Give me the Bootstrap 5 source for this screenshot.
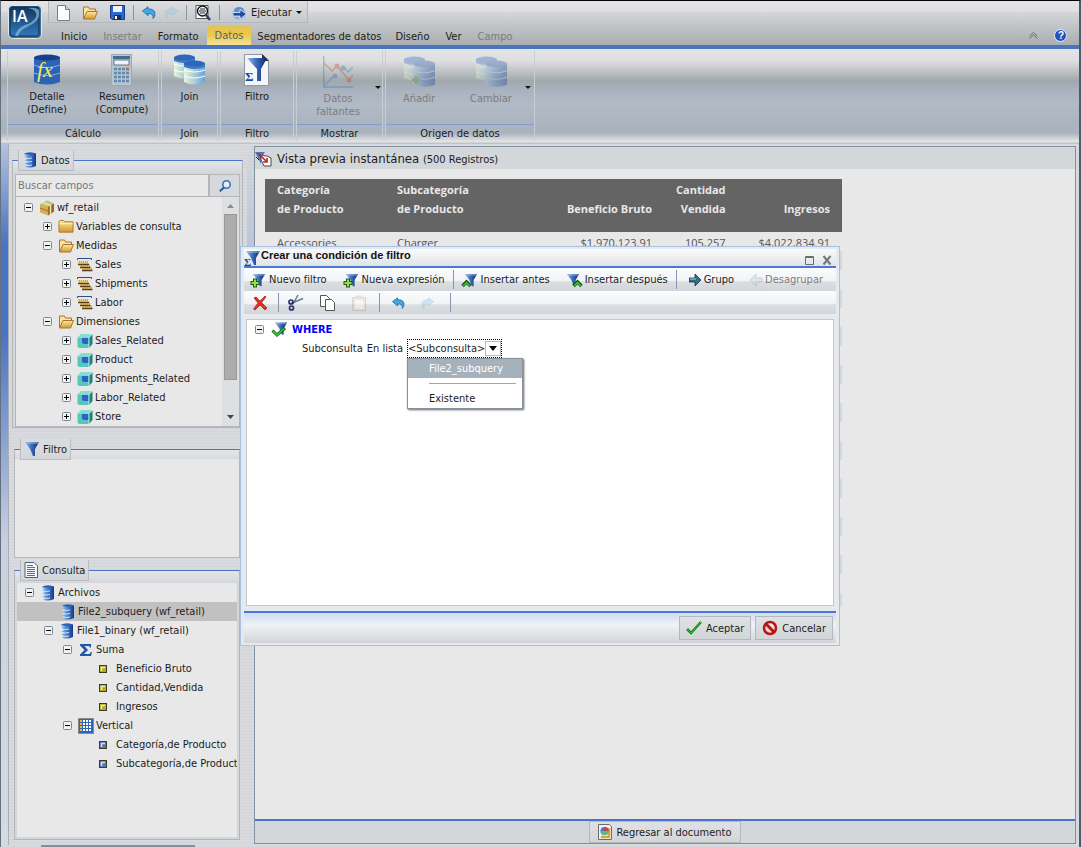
<!DOCTYPE html>
<html lang="es">
<head>
<meta charset="utf-8">
<meta name="viewport" content="width=device-width, initial-scale=1">
<title>InfoAssist</title>
<link href="https://cdn.jsdelivr.net/npm/bootstrap@5.3.0/dist/css/bootstrap.min.css" rel="stylesheet">
<style>
body{font:11px/13px "DejaVu Sans Condensed","Open Sans",sans-serif;color:#1c1c1c;background:#d6d8dc}
button,input{font:inherit;color:inherit}
button{background:none;border:0;padding:0}
svg{flex:none;overflow:visible}
ul{list-style:none;margin:0;padding:0}
.app{min-height:100vh;border-top:1px solid #000;border-left:1px solid #66707c;border-right:2px solid #4b5b70}
.off{color:#7b7d80}
.faded{opacity:.35}
/* header */
.top-bar{height:48px;background:linear-gradient(#e4e4e6 0,#dfdfe1 10px,#d2d5d7 12px,#a9adaf 44px);border-bottom:4px solid #4b74be}
.logo{width:34px;height:34px;margin:4px 6px 0 7px}
.quick{height:22px;padding:2px 5px 0 7px;border:1px solid #b4b8bc;border-top:0;background:linear-gradient(#dcdee0,#c6cacd)}
.bar-sep{width:1px;height:15px;background:#8c939b}
.tabs-row{height:22px;padding-left:5px}
.tabs-row button{padding:3px 8px 0;height:20px;white-space:nowrap}
.tabs-row .long{padding:3px 6px 0}
.tabs-row .chosen{padding-top:1px;background:linear-gradient(#e0c25c,#ecc84a 50%,#f6e29a);color:#55636b}
/* ribbon */
.ribbon{height:95px;gap:2px;padding-left:6px;background:linear-gradient(#e3e4e6 0,#dededf 12px,#a0a8ac 32px,#aab3bf 42px,#b1bbc6 55px,#abb3bf 76px,#abb3bf 84px,#e6e6e6 93px,#bfc2c6 94px)}
.rib-group{border-left:1px solid #c9ccd2;border-right:1px solid #c9ccd2;height:90px;margin-top:2px}
.rib-group .acts{height:74px;border-bottom:1px solid #7e9bd0}
.rib-group .acts button{width:74px;height:70px;padding-top:3px;display:flex;flex-direction:column;align-items:center}
.rib-group .acts svg{margin-bottom:4px}
.rib-group .rib-name{text-align:center;line-height:17px}
.caret-s{border:3px solid transparent;border-top:3px solid #111;border-bottom:0;width:0;height:0}
/* work area */
.strip{width:8px;border-right:1px solid #a9adb4;background:linear-gradient(#b3c3e0,#4a73c3 100px,#4a73c3 190px,#c9d1e0 400px,#d6dae2)}
.gutter{width:11px;background:linear-gradient(90deg,transparent 4px,#a9b9d6 4px);-webkit-mask:linear-gradient(transparent,#000 170px,#000 250px,transparent 500px);mask:linear-gradient(transparent,#000 170px,#000 250px,transparent 500px)}
.work{background:repeating-linear-gradient(#d8dadd 0 2px,#d2d5da 2px 3px)}
.left-col{width:234px;padding:7px 3px 5px}
.frame{border:1px solid #b4b6ba;border-top:1px solid #4a74c9;position:relative;background:linear-gradient(#e4e5e7,#d4d7da 12px)}
.frame-tab{position:absolute;top:-11px;left:5px;height:21px;padding:0 3px;gap:3px;background:linear-gradient(#d9dbde 9px,#d4d7da);border:1px solid #b9bcc1;border-top:0}
.f-one{height:268px;margin-top:9px;padding:13px 2px 2px;margin-right:-3px}
.f-two{height:109px;margin:21px 0 0 2px;padding-top:9px}
.f-three{margin:12px 0 0 2px;padding:12px 2px 2px}
.pane{background:#e8e8e8}
.edged{border:1px solid #b4b6ba;border-top:0}
.search{height:23px;border:1px solid #b4b6ba}
.search input{border:0;background:#e8e8e8;padding:0 2px;outline:0;min-width:0}
.search input::placeholder{color:#77797c;opacity:1}
.search button{width:31px;border-left:2px solid #b4b6ba;background:#d5d9dc}
.tree{overflow:hidden;min-width:0}
.edged .tree{padding-top:1px}
.tree li{height:19px;display:flex;align-items:center;gap:2px;white-space:nowrap;padding-left:8px}
.tree .l1{padding-left:27px}
.tree .l2{padding-left:46px}
.tree .l3{padding-left:82px;gap:9px}
.tree .picked{background:#c1c1c1;padding-left:43px}
.tree .tw{margin-right:4px}
.gold{color:#b5ac16}
.blue{color:#5577b0}
.scroller{width:17px;background:#dedfe0}
.scroller .thumb{width:13px;height:166px;background:#acacac;border:1px solid #989898}
/* preview */
.preview{border:1px solid #8291a1;background:#e8e8e8;margin:2px 3px 1px 0}
.preview-title{height:22px;padding-top:1px;background:#d3d7da;font-size:13px}
.preview-title small{font-size:11px}
.report-box{width:577px;height:428px;margin:10px 0 0 10px;background:linear-gradient(#e8e8e8 72px,transparent 72px),repeating-linear-gradient(#d6d6de 0 19px,#e8e8e8 19px 38px);background-position:0 0,0 -4px}
.report{font:11px/19px "Open Sans",sans-serif;width:100%}
.report th{background:#646464;color:#e8e8e8;font-weight:700;height:53px;vertical-align:top;padding:1px 12px 0}
.report th.low{padding-top:20px}
.report td{padding:1px 12px 0;color:#555}
.preview-foot{height:24px;border-top:2px solid #4a74c9;background:#d3d7da}
.boxed{border:1px solid #b5b9bd;background:linear-gradient(#dfe1e4,#d3d6d9)}
.status{height:2px;padding-left:40px}
.status span{width:154px;background:#8090a0}
/* dialog */
.dlg{position:absolute;left:50%;top:245px;width:600px;height:400px;transform:translateX(-50%);border:1px solid #a6c1e2;background:#e6eaee;padding:2px 3px 2px}
.dlg-title{height:19px;background:linear-gradient(#fafbfc,#dfe3e7);border-bottom:2px solid #4a78d3;font:bold 11px/13px "Liberation Sans",sans-serif;color:#111}
.tool-row{height:23px;background:linear-gradient(#fbfcfd,#f1f3f5 55%,#dcdfe2 60%,#d2d5d9)}
.tb{display:flex;align-items:center;gap:3px}
.tool-sep{width:1px;height:19px;background:#8796ae}
.canvas{border:1px solid #c3c7cb;background:#fff;margin:5px 2px}
.dlg-foot{height:32px;border-top:2px solid #4a78d3;background:linear-gradient(#cfdcf3,#f0f2f5 40%,#d2d5d8);padding:3px 3px 0}
.dlg-foot button{height:24px;padding:0 6px}
.pick{border:1px dotted #000;height:19px}
.pick i{width:16px;height:15px;border:1px solid #b8bcc2;display:flex;align-items:center;justify-content:center}
.pick i::after{content:"";border:4px solid transparent;border-top:5px solid #000;border-bottom:0}
.pick.dropdown-toggle::after{display:none}
.pop{position:absolute;left:0;top:19px;width:116px;min-width:0;display:block;border:1px solid #86919c;border-radius:0;padding:0;font-size:11px;box-shadow:1px 1px 2px #666}
.pop a{display:block;padding:3px 21px;color:#1c1c1c;text-decoration:none;line-height:13px}
.pop .on{background:#a6b2bb;color:#fff}
.pop hr{margin:5px 6px 5px 21px;border-color:#8c8c8c;opacity:.8}
.where{color:#00f}
</style>
</head>
<body>
<svg width="0" height="0" class="position-absolute" aria-hidden="true">
<defs>
<linearGradient id="gb"><stop offset="0" stop-color="#a9ccf0"/><stop offset=".45" stop-color="#4d86d0"/><stop offset="1" stop-color="#12368f"/></linearGradient>
<linearGradient id="gl"><stop offset="0" stop-color="#e8f4d8"/><stop offset="1" stop-color="#6aa5d8"/></linearGradient>
<linearGradient id="gf" x2="1"><stop offset="0" stop-color="#9fc0e8"/><stop offset=".45" stop-color="#3b6fc4"/><stop offset="1" stop-color="#10245c"/></linearGradient>
<linearGradient id="gy" y2="1" x2="0"><stop offset="0" stop-color="#fbe9a5"/><stop offset="1" stop-color="#d19a2c"/></linearGradient>
<linearGradient id="lg" y2="1" x2="0"><stop offset="0" stop-color="#11375f"/><stop offset="1" stop-color="#2f79ba"/></linearGradient>
<symbol id="db" viewBox="0 0 16 16"><path d="M2 1.500Q8 -.5 14 1.500v12.500Q9 16.500 4 15l-1-1 2-1-3-1.500 3-1.500-3-1.500 3-1.500-3-1.500 2-1.500-2-1z" fill="url(#gb)"/><path d="M2 1.500Q8 -.5 14 1.500 8 4 2 1.500z" fill="#2b5fb5"/><path d="M2 6q5 1 8 0M2 9.500q5 1 8 0M3 13q4 1 7 0" stroke="#e0eefb" fill="none" stroke-width=".9"/></symbol>
<symbol id="cyl" viewBox="0 0 22 26" preserveAspectRatio="none"><path d="M0 3v19q11 5 22 0V3z" fill="url(#gl)"/><path d="M0 10q11 4 22 0M0 16q11 4 22 0" stroke="#fff" fill="none"/><path d="M0 3v4q11 4 22 0V3z" fill="#3f78c4"/><ellipse cx="11" cy="3.500" rx="11" ry="3" fill="#2d66bd"/></symbol>
<symbol id="cylb" viewBox="0 0 22 26" preserveAspectRatio="none"><path d="M0 3v20q11 4 22 0V3z" fill="url(#gb)"/><path d="M0 10q11 4 22 0M0 16q11 4 22 0" stroke="#9cc3ee" fill="none"/><ellipse cx="11" cy="3.500" rx="11" ry="3" fill="#2a5fae"/></symbol>
<symbol id="funnel" viewBox="0 0 16 16"><path d="M1 1h14l-4 7v7H9L6 8z" fill="url(#gf)"/><path d="M1 1h14l-1 2H2z" fill="#a8c3e8" opacity=".5"/></symbol>
<symbol id="fold" viewBox="0 0 16 16"><path d="M.5 3l1-1.500h4l1 1.500h9v11H.5z" fill="url(#gy)" stroke="#a9752a"/><path d="M1 5h14" stroke="#fff3c0"/></symbol>
<symbol id="foldo" viewBox="0 0 16 16"><path d="M1.500 13V2h5l1 2h6v3" fill="#fbe3a6" stroke="#b0712a"/><path d="M1.500 14L5 6.500h10.500L12.500 14z" fill="url(#gy)" stroke="#a9752a"/></symbol>
<symbol id="plus" viewBox="0 0 9 9"><rect x=".5" y=".5" width="8" height="8" rx="1" fill="#f2f2ee" stroke="#7b8794"/><path d="M2 4.500h5M4.500 2v5" stroke="#000"/></symbol>
<symbol id="minus" viewBox="0 0 9 9"><rect x=".5" y=".5" width="8" height="8" rx="1" fill="#f2f2ee" stroke="#7b8794"/><path d="M2 4.500h5" stroke="#000"/></symbol>
<symbol id="meas" viewBox="0 0 16 16"><path d="M.5 3V1.500h14V3" stroke="#2a4f8a" fill="none"/><path d="M1 4h10v3h2v3h2v4H5v-3H3V8H1z" fill="#efd38c"/><path d="M1 7.500h11M3 10.500h10.500M5 13.500h10.500" stroke="#5e3d10" stroke-width="1.500"/><path d="M2 5h9M4 9h9M6 12h9" stroke="#a37a2c" stroke-dasharray="1 1"/></symbol>
<symbol id="cube" viewBox="0 0 16 16"><path d="M.5 4.500L4 1h11.500L12 4.500z" fill="#7fe0d2"/><path d="M12 4.500L15.500 1v10L12 15z" fill="#1f8079"/><path d="M.5 4.500H12V15H2L.5 13.500z" fill="#56c8ba"/><path d="M5 5h6.500v6H7l-2-1z" fill="#2a62c8"/><path d="M12 15V4.500L15.500 1" stroke="#dffbf6" stroke-width=".8" fill="none"/></symbol>
<symbol id="pack" viewBox="0 0 16 16"><path d="M1 4.500L8 .5l7 3v8L9 15.500l-8-3z" fill="#d7ad55"/><path d="M9 6.500l6-3v8l-6 4z" fill="#946a2c"/><path d="M1 4.500L8 .5l7 3-6 3z" fill="#b8c981"/><path d="M4 2.700l7.500 2.500v9" stroke="#ece3a5" fill="none" stroke-width="1.500"/><path d="M1 8l8 3" stroke="#a56c31"/></symbol>
<symbol id="undo" viewBox="0 0 14 13"><path d="M.5 5L6 .8V3q6-.5 7 4 .5 3-2 5.500Q12 7.500 6 7.500v2.200z" fill="#42a6e3" stroke="#17679f" stroke-width=".8"/></symbol>
<symbol id="redo" viewBox="0 0 14 13"><path d="M13.500 5L8 .8V3Q2 2.500 1 7q-.5 3 2 5.500Q2 7.500 8 7.500v2.200z" fill="#8cc8e8" stroke="#6aa9c8" stroke-width=".8"/></symbol>
<symbol id="page" viewBox="0 0 14 16"><path d="M1.500.5h8l4 4v11h-12z" fill="#fcfcfc" stroke="#777e88"/><path d="M9.500.5v4h4" fill="#d8dce2" stroke="#777e88"/></symbol>
<symbol id="grow" viewBox="0 0 12 12"><path d="M0 4h6V0l6 6-6 6V8H0z" fill="#2c7084" stroke="#123142" stroke-width=".8"/><path d="M1 5h6" stroke="#a5d4df"/></symbol>
<symbol id="sq" viewBox="0 0 8 8"><rect x=".5" y=".5" width="7" height="7" fill="currentColor" stroke="#3b3d2a"/><path d="M2.500 6V2.500H6" stroke="#fff" opacity=".75" fill="none" stroke-width="1.500"/></symbol>
<symbol id="fplus" viewBox="0 0 16 16"><use href="#funnel" x="2" width="14" height="16"/><path d="M5 6.500v9M.5 11h9" stroke="#245c10" stroke-width="4"/><path d="M5 7.500v7M1.500 11h7" stroke="#8ee04e" stroke-width="2"/></symbol>
</defs>
</svg>
<div class="app d-flex flex-column position-relative">
<header class="top-bar d-flex">
<svg class="logo" viewBox="0 0 34 34"><rect x=".5" y=".5" width="33" height="33" rx="4" fill="#456f97" stroke="#dfe8ee"/><rect x="2" y="2" width="29" height="29" rx="2" fill="url(#lg)" stroke="#0e2c4b"/><path d="M20 3q10 2 8 9-2 5-11 8-8 3-10 11h3q2-6 9-9 11-5 12-11V5q-3-3-11-2z" fill="#8db9dd" opacity=".7"/><text x="4" y="17" font-family="Open Sans" font-weight="600" font-size="16" fill="#fff">IA</text></svg>
<div class="flex-grow-1">
<div class="d-flex"><div class="quick d-flex align-items-center gap-2">
<button class="me-1" aria-label="Nuevo"><svg width="14" height="16"><use href="#page"/></svg></button>
<button class="me-1" aria-label="Abrir"><svg width="16" height="16"><use href="#foldo"/></svg></button>
<button aria-label="Guardar"><svg width="15" height="15" viewBox="0 0 15 15"><path d="M.5.500h14v14H2l-1.500-1.500z" fill="#2c66cf" stroke="#173c82"/><path d="M3 1h9v6H3z" fill="#eef4fb"/><path d="M4 10h7v4.500H4z" fill="#182d55"/><path d="M5 11h2v3H5z" fill="#fff"/></svg></button>
<span class="bar-sep"></span>
<button aria-label="Deshacer"><svg width="14" height="13"><use href="#undo"/></svg></button>
<button class="faded" aria-label="Rehacer"><svg width="14" height="13"><use href="#redo"/></svg></button>
<span class="bar-sep"></span>
<button aria-label="Vista previa"><svg width="16" height="16" viewBox="0 0 16 16"><path d="M1 .5h12v13H1z" fill="#fff" stroke="#555"/><circle cx="7.500" cy="6" r="5" fill="#eef" stroke="#111" stroke-width="1.300"/><path d="M5 4h5M4 6h7M5 8h5" stroke="#333"/><path d="M11 10l4 5" stroke="#27406e" stroke-width="2.500"/></svg></button>
<span class="bar-sep me-1"></span>
<button class="d-flex align-items-center gap-1"><svg width="15" height="14" viewBox="0 0 15 14"><ellipse cx="7" cy="8" rx="7" ry="5.500" fill="#8fb0e0"/><ellipse cx="7" cy="4" rx="5" ry="3" fill="#5e8ed5"/><path d="M1 6.500h7V3.500l6.500 4.500-6.500 5V10H1z" fill="#1c4c9c" stroke="#fff" stroke-width=".7"/></svg>Ejecutar<span class="caret-s"></span></button>
</div></div>
<nav class="tabs-row d-flex align-items-end">
<button>Inicio</button><button class="off">Insertar</button><button>Formato</button><button class="chosen">Datos</button><button class="long">Segmentadores de datos</button><button>Diseño</button><button>Ver</button><button class="off">Campo</button>
</nav></div>
<div class="d-flex align-items-center gap-3 pt-4 me-2 pe-1"><button aria-label="Contraer cinta"><svg width="9" height="7" viewBox="0 0 9 7" class="d-block"><path d="M.5 4l4-3.500 4 3.500M.5 6.500L4.500 3l4 3.500" fill="none" stroke="#6b7075"/></svg></button>
<button aria-label="Ayuda"><svg width="13" height="13" viewBox="0 0 13 13" class="d-block"><circle cx="6.500" cy="6.500" r="6" fill="#2453bd" stroke="#eef"/><text x="4" y="10" font-family="Liberation Sans" font-weight="bold" font-size="10" fill="#fff">?</text></svg></button></div>
</header>
<section class="ribbon d-flex">
<div class="rib-group" style="width:152px"><div class="acts d-flex">
<button style="width:80px"><svg width="26" height="32" viewBox="0 0 26 32"><path d="M0 3v25q13 5 26 0V3z" fill="#2c62b8"/><path d="M0 11q13 5 26 0M0 19q13 5 26 0" stroke="#7faee6" fill="none"/><ellipse cx="13" cy="3.500" rx="13" ry="3" fill="#16408e"/><text x="3" y="23" font-family="Liberation Serif" font-style="italic" font-size="22" fill="#f4ec4e">fx</text></svg>Detalle<br>(Define)</button>
<button><svg width="21" height="32" viewBox="0 0 21 32"><rect x=".5" y=".5" width="20" height="31" fill="#b8c5ce" stroke="#9aabb8"/><rect x="2" y="2" width="17" height="3" fill="#456b93"/><rect x="3" y="6" width="15" height="5" fill="#eef6fb" stroke="#678"/><path d="M3 15h15M3 19h15M3 23h15M3 27h15" stroke="#5f8bad" stroke-width="2.500" stroke-dasharray="3 1"/><path d="M15 15h3" stroke="#d8632a" stroke-width="2.500"/></svg>Resumen<br>(Compute)</button></div><div class="rib-name">Cálculo</div></div>
<div class="rib-group" style="width:57px"><div class="acts d-flex"><button class="w-100"><svg width="31" height="32" viewBox="0 0 31 32"><use href="#cyl" width="21" height="26"/><use href="#cyl" x="10" y="6" width="21" height="26"/></svg>Join</button></div><div class="rib-name">Join</div></div>
<div class="rib-group" style="width:74px"><div class="acts d-flex"><button><svg width="26" height="32" viewBox="0 0 26 32"><path d="M.5.500h18l6 6v25H.5z" fill="#f4f6f8" stroke="#8e98a2"/><path d="M18 0l7 7h-7z" fill="#333"/><path d="M3 4h20l-6 11v12h-4V15z" fill="url(#gf)"/><text x="1" y="27" font-family="Liberation Serif" font-weight="bold" font-size="13" fill="#174b9c">Σ</text></svg>Filtro</button></div><div class="rib-name">Filtro</div></div>
<div class="rib-group" style="width:87px"><div class="acts d-flex align-items-center ps-1"><button class="off"><svg class="faded" width="30" height="32" viewBox="0 0 30 32"><path d="M.7 0v31H30" stroke="#2771a8" fill="none" stroke-width="1.400"/><path d="M1 7l8 8 5-5 12 14 4-5" stroke="#c3452f" fill="none" stroke-width="1.500"/><path d="M1 30l10-10M20 10l5 6 5-5" stroke="#3f78bd" fill="none" stroke-width="1.500"/><circle cx="14" cy="10" r="2.500" fill="#c3452f"/><circle cx="26" cy="24" r="2.500" fill="#c3452f"/><circle cx="12" cy="20" r="2.500" fill="#3c6db4"/><circle cx="20" cy="12" r="2.500" fill="#3c6db4"/></svg>Datos<br>faltantes</button><span class="caret-s"></span></div><div class="rib-name">Mostrar</div></div>
<div class="rib-group" style="width:150px"><div class="acts d-flex align-items-center"><button class="off" style="width:66px"><svg class="faded" width="31" height="32" viewBox="0 0 31 32"><use href="#cyl" width="21" height="26"/><use href="#cylb" x="9" y="4" width="22" height="28"/><path d="M12 20v8M8 24h8" stroke="#4f9d24" stroke-width="3"/></svg>Añadir</button><button class="off" style="width:78px"><svg class="faded" width="31" height="32" viewBox="0 0 31 32"><use href="#cyl" width="21" height="26"/><use href="#cylb" x="9" y="4" width="22" height="28"/></svg>Cambiar</button><span class="caret-s" style="margin-left:-5px"></span></div><div class="rib-name">Origen de datos</div></div>
</section>
<main class="work d-flex flex-grow-1">
<div class="strip"></div>
<aside class="left-col d-flex flex-column">
<section class="frame f-one d-flex flex-column"><div class="frame-tab d-flex align-items-center"><svg width="16" height="16"><use href="#db"/></svg>Datos</div>
<div class="search d-flex flex-shrink-0"><input class="flex-grow-1" type="search" placeholder="Buscar campos" aria-label="Buscar campos"><button aria-label="Buscar"><svg width="12" height="12" viewBox="0 0 12 12"><circle cx="7.500" cy="4.500" r="3.700" fill="#e6eef8" stroke="#3a6fb8" stroke-width="1.600"/><path d="M5 7.500L.8 11.200" stroke="#28599e" stroke-width="2"/></svg></button></div>
<div class="pane edged d-flex flex-grow-1"><ul class="tree flex-grow-1">
<li><svg class="tw" width="9" height="9"><use href="#minus"/></svg><svg width="16" height="16"><use href="#pack"/></svg>wf_retail</li>
<li class="l1"><svg class="tw" width="9" height="9"><use href="#plus"/></svg><svg width="16" height="15"><use href="#fold"/></svg>Variables de consulta</li>
<li class="l1"><svg class="tw" width="9" height="9"><use href="#minus"/></svg><svg width="16" height="16"><use href="#foldo"/></svg>Medidas</li>
<li class="l2"><svg class="tw" width="9" height="9"><use href="#plus"/></svg><svg width="16" height="16"><use href="#meas"/></svg>Sales</li>
<li class="l2"><svg class="tw" width="9" height="9"><use href="#plus"/></svg><svg width="16" height="16"><use href="#meas"/></svg>Shipments</li>
<li class="l2"><svg class="tw" width="9" height="9"><use href="#plus"/></svg><svg width="16" height="16"><use href="#meas"/></svg>Labor</li>
<li class="l1"><svg class="tw" width="9" height="9"><use href="#minus"/></svg><svg width="16" height="16"><use href="#foldo"/></svg>Dimensiones</li>
<li class="l2"><svg class="tw" width="9" height="9"><use href="#plus"/></svg><svg width="16" height="16"><use href="#cube"/></svg>Sales_Related</li>
<li class="l2"><svg class="tw" width="9" height="9"><use href="#plus"/></svg><svg width="16" height="16"><use href="#cube"/></svg>Product</li>
<li class="l2"><svg class="tw" width="9" height="9"><use href="#plus"/></svg><svg width="16" height="16"><use href="#cube"/></svg>Shipments_Related</li>
<li class="l2"><svg class="tw" width="9" height="9"><use href="#plus"/></svg><svg width="16" height="16"><use href="#cube"/></svg>Labor_Related</li>
<li class="l2"><svg class="tw" width="9" height="9"><use href="#plus"/></svg><svg width="16" height="16"><use href="#cube"/></svg>Store</li>
</ul><div class="scroller d-flex flex-column align-items-center"><svg width="17" height="17" viewBox="0 0 17 17"><path d="M5 11h7L8.500 7z" fill="#8c8c8c"/></svg><span class="thumb"></span><svg class="mt-auto" width="17" height="17" viewBox="0 0 17 17"><path d="M5 6h7L8.500 10z" fill="#444"/></svg></div></div>
</section>
<section class="frame f-two d-flex"><div class="frame-tab d-flex align-items-center"><svg width="16" height="16"><use href="#funnel"/></svg>Filtro</div><div class="pane flex-grow-1"></div></section>
<section class="frame f-three d-flex flex-grow-1"><div class="frame-tab d-flex align-items-center"><svg width="15" height="16" viewBox="0 0 15 16"><path d="M1 .5h9l3.500 3.500v11.500H1z" fill="#f4f8fc" stroke="#54616f"/><path d="M3 3.500h6M3 5.500h8M3 7.500h8M3 9.500h8M3 11.500h8M3 13.500h8" stroke="#3a76b8"/></svg>Consulta</div>
<ul class="tree pane flex-grow-1">
<li><svg class="tw" width="9" height="9"><use href="#minus"/></svg><svg width="16" height="16"><use href="#db"/></svg>Archivos</li>
<li class="picked"><svg width="16" height="16"><use href="#db"/></svg>File2_subquery (wf_retail)</li>
<li class="l1"><svg class="tw" width="9" height="9"><use href="#minus"/></svg><svg width="16" height="16"><use href="#db"/></svg>File1_binary (wf_retail)</li>
<li class="l2"><svg class="tw" width="9" height="9"><use href="#minus"/></svg><svg width="16" height="16" viewBox="0 0 16 16"><path d="M2 2h11v3.500h-1L11 4H6.500L10 8l-4 4h5.500L13 10h1l-1 4H2v-1.500L6.500 8 2 3.500z" fill="#1f57ab"/></svg>Suma</li>
<li class="l3"><svg class="gold" width="8" height="8"><use href="#sq"/></svg>Beneficio Bruto</li>
<li class="l3"><svg class="gold" width="8" height="8"><use href="#sq"/></svg>Cantidad,Vendida</li>
<li class="l3"><svg class="gold" width="8" height="8"><use href="#sq"/></svg>Ingresos</li>
<li class="l2"><svg class="tw" width="9" height="9"><use href="#minus"/></svg><svg width="16" height="16" viewBox="0 0 16 16"><path d="M.5.500h15v15H.5z" fill="#2f66b6" stroke="#888"/><path d="M2 3h12M2 6h12M2 9h12M2 12h12" stroke="#fff" stroke-width="2" stroke-dasharray="2 1"/><path d="M2 3h2M2 6h2M2 9h2M2 12h2" stroke="#f2b52d" stroke-width="2"/></svg>Vertical</li>
<li class="l3"><svg class="blue" width="8" height="8"><use href="#sq"/></svg>Categoría,de Producto</li>
<li class="l3"><svg class="blue" width="8" height="8"><use href="#sq"/></svg>Subcategoría,de Producto</li>
</ul></section>
</aside>
<div class="gutter"></div>
<section class="preview d-flex flex-column flex-grow-1">
<div class="preview-title d-flex align-items-center"><svg width="18" height="16" viewBox="0 0 18 16"><path d="M0 1h10L6 7v6z" fill="#4979bd"/><path d="M1 6l3 3M4 4l3 3" stroke="#222"/><path d="M6 9V5l2-1 2 1h2l2 1 2 1v8H9z" fill="#fff" stroke="#444"/><path d="M3 2l9 9M12 7v4H8" stroke="#c22929" stroke-width="1.700" fill="none"/></svg><span class="ps-1">Vista previa instantánea <small>(500 Registros)</small></span></div>
<div class="report-box"><table class="report"><colgroup><col style="width:120px"><col style="width:150px"><col style="width:129px"><col style="width:73px"><col></colgroup>
<thead><tr><th>Categoría<br>de Producto</th><th>Subcategoría<br>de Producto</th><th class="low text-end text-nowrap">Beneficio Bruto</th><th class="text-end">Cantidad<br>Vendida</th><th class="low text-end">Ingresos</th></tr></thead>
<tbody><tr><td>Accessories</td><td>Charger</td><td class="text-end">$1,970,123.91</td><td class="text-end">105,257</td><td class="text-end">$4,022,834.91</td></tr></tbody></table></div>
<footer class="preview-foot mt-auto d-flex justify-content-center"><button class="boxed px-2 d-flex align-items-center gap-1"><svg width="14" height="16" viewBox="0 0 14 16"><path d="M.5.500h11l2 2v13H.5z" fill="#f2f2f2" stroke="#6b6b6b"/><path d="M11 4v9H3" stroke="#e5a52c" stroke-width="2.500" fill="none"/><circle cx="6.500" cy="7" r="4" fill="#3d7be0"/><path d="M6.500 7V3a4 4 0 014 4z" fill="#e03c28"/><path d="M2.500 7h8a4 4 0 01-8 0z" fill="#5cb88a"/></svg>Regresar al documento</button></footer>
</section>
</main>
<div class="status d-flex"><span></span></div>
<div class="dlg d-flex flex-column" role="dialog" aria-label="Crear una condición de filtro">
<div class="dlg-title d-flex"><svg width="17" height="17" viewBox="0 0 17 17"><use href="#funnel" x="1" y="1" width="16" height="16"/><text x="0" y="17" font-family="Liberation Serif" font-weight="bold" font-size="11" fill="#174b9c">Σ</text></svg><span class="flex-grow-1">Crear una condición de filtro</span>
<button aria-label="Maximizar" class="me-2 pt-1"><svg width="9" height="9" viewBox="0 0 9 9"><path d="M.5.500h8v8h-8zM0 1.500h9" fill="none" stroke="#6a6e72"/></svg></button><button aria-label="Cerrar" class="me-1 pt-1"><svg width="10" height="9" viewBox="0 0 10 9"><path d="M1.500 0L8.500 8.500M8.500 0L1.500 8.500" stroke="#74777a" stroke-width="2"/></svg></button></div>
<div class="tool-row d-flex align-items-center text-nowrap" style="padding-left:6px">
<button class="tb me-3"><svg width="16" height="16"><use href="#fplus"/></svg>Nuevo filtro</button>
<button class="tb me-2"><svg width="16" height="16"><use href="#fplus"/></svg>Nueva expresión</button>
<span class="tool-sep"></span>
<button class="tb ms-2 me-3"><svg width="16" height="16" viewBox="0 0 16 16"><use href="#funnel" x="2" width="14" height="16"/><path d="M.5 14L4.500 10l4 4" fill="none" stroke="#0c5a12" stroke-width="3.500"/><path d="M1 14L4.500 10.500 8 14" fill="none" stroke="#3fc43c" stroke-width="1.500"/></svg>Insertar antes</button>
<button class="tb me-2"><svg width="16" height="16" viewBox="0 0 16 16"><use href="#funnel" width="14" height="16"/><path d="M7.500 14l4-4 4 4" fill="none" stroke="#0c5a12" stroke-width="3.500"/><path d="M8 14l3.500-3.500L15 14" fill="none" stroke="#3fc43c" stroke-width="1.500"/></svg>Insertar después</button>
<span class="tool-sep"></span>
<button class="tb ms-2 me-3 ps-1"><svg width="12" height="12"><use href="#grow"/></svg>Grupo</button>
<button class="tb off"><svg width="12" height="12" viewBox="0 0 12 12" class="faded"><path d="M12 4H6V0L0 6l6 6V8h6z" fill="#b9cfd6" stroke="#7d98a2"/></svg>Desagrupar</button>
</div>
<div class="tool-row d-flex align-items-center" style="padding-left:9px">
<button aria-label="Eliminar" style="margin-right:11px"><svg width="14" height="14" viewBox="0 0 14 14"><path d="M1 2l2-1 4 4 5-5 1 1-4.500 5.500L14 12l-2 2-5-5-5 5-1.500-1L5 7z" fill="#e3301c" stroke="#a31a10" stroke-width=".7"/></svg></button><span class="tool-sep"></span>
<button aria-label="Cortar" class="ms-2"><svg width="17" height="16" viewBox="0 0 17 16"><path d="M6 9L11 0M4 8.500l12-5" stroke="#6d7886" stroke-width="1.500"/><circle cx="4" cy="7" r="2" fill="none" stroke="#26306e" stroke-width="1.700"/><circle cx="4.500" cy="13" r="2" fill="none" stroke="#26306e" stroke-width="1.700"/></svg></button>
<button aria-label="Copiar" class="ms-3"><svg width="16" height="16" viewBox="0 0 16 16"><path d="M.5.500h6l3 3v8h-9z" fill="#fff" stroke="#555"/><path d="M5.500 4.500h6l3 3v8h-9z" fill="#fff" stroke="#555"/></svg></button>
<button aria-label="Pegar" class="ms-3 faded"><svg width="14" height="16" viewBox="0 0 14 16"><path d="M.5 2.500h13v13H.5z" fill="#e4d2b8" stroke="#b59a7d"/><path d="M4 .5h6v3H4z" fill="#bbb"/><path d="M3 5h8l1 9H3z" fill="#fff"/></svg></button>
<span class="tool-sep" style="margin-left:13px"></span>
<button aria-label="Deshacer" class="mx-2 ps-1 me-3"><svg width="13" height="12"><use href="#undo"/></svg></button>
<button aria-label="Rehacer" class="faded me-3"><svg width="13" height="12"><use href="#redo"/></svg></button><span class="tool-sep"></span>
</div>
<div class="canvas flex-grow-1 px-2">
<div class="d-flex align-items-center" style="height:18px"><svg width="9" height="9"><use href="#minus"/></svg><svg class="ms-2" width="16" height="16" viewBox="0 0 16 16"><use href="#funnel" x="2" width="14" height="15"/><path d="M.5 9.500L5 14l8-7" fill="none" stroke="#0d6a10" stroke-width="3"/><path d="M1 10l4 4 7-6.500" fill="none" stroke="#42cf3e" stroke-width="1.300"/></svg><b class="ms-1 where">WHERE</b></div>
<div class="d-flex align-items-center gap-1" style="padding-left:47px;height:21px"><span>Subconsulta</span><span>En lista</span>
<div class="position-relative"><button class="pick dropdown-toggle d-flex align-items-center" aria-expanded="true">&lt;Subconsulta&gt;<i></i></button>
<div class="dropdown-menu pop show"><a class="on" href="#">File2_subquery</a><hr><a href="#">Existente</a></div></div></div>
</div>
<div class="dlg-foot d-flex justify-content-end gap-1"><button class="boxed d-flex align-items-center gap-1"><svg width="16" height="14" viewBox="0 0 16 14"><path d="M1 8l4 4L15 1" fill="none" stroke="#12791a" stroke-width="2.500"/><path d="M1 8l4 4L15 1" fill="none" stroke="#2fce2f"/></svg>Aceptar</button>
<button class="boxed d-flex align-items-center gap-1"><svg width="16" height="16" viewBox="0 0 16 16"><circle cx="8" cy="8" r="6" fill="#f2dcdc" stroke="#b81616" stroke-width="2.500"/><path d="M4 4l8 8" stroke="#b81616" stroke-width="3"/></svg>Cancelar</button></div>
</div>
</div>
<script src="https://cdn.jsdelivr.net/npm/bootstrap@5.3.0/dist/js/bootstrap.bundle.min.js"></script>
</body>
</html>
